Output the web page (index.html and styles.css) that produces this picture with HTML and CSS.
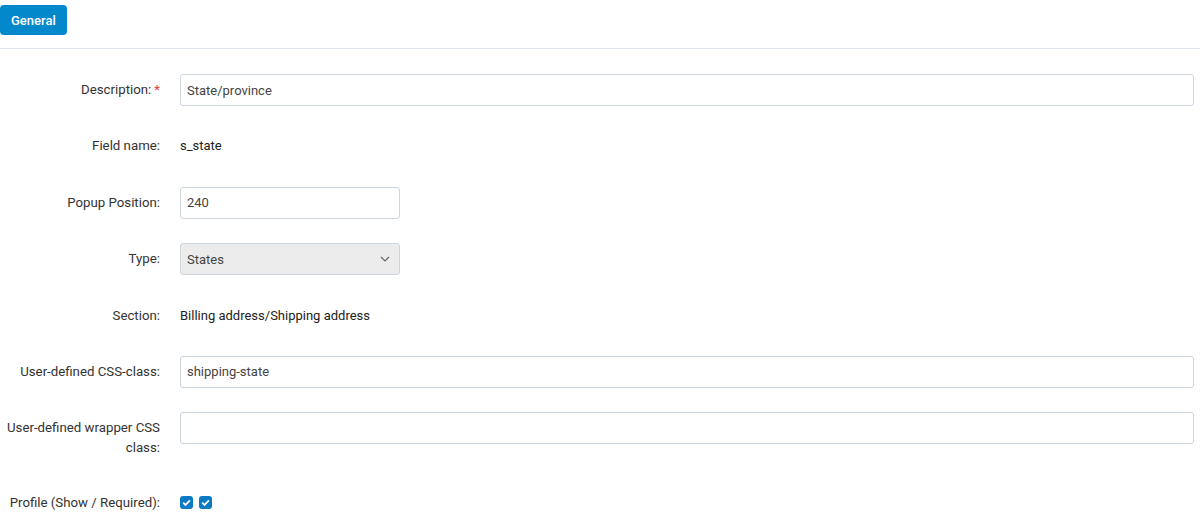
FILE: index.html
```html
<!DOCTYPE html>
<html lang="en">
<head>
  <meta charset="UTF-8">
  <title>Profile field</title>
  <link rel="stylesheet" href="styles.css">
</head>
<body>

  <div class="tabs">
    <button class="tab active">General</button>
  </div>

  <form class="form">
    <div class="row">
      <label class="label">Description:<span class="req">*</span></label>
      <div class="control"><input class="input" type="text" value="State/province"></div>
    </div>

    <div class="row">
      <label class="label">Field name:</label>
      <div class="control text">s_state</div>
    </div>

    <div class="row">
      <label class="label">Popup Position:</label>
      <div class="control"><input class="input short" type="text" value="240"></div>
    </div>

    <div class="row">
      <label class="label">Type:</label>
      <div class="control">
        <div class="select short">
          <span>States</span>
          <svg width="10" height="6" viewBox="0 0 10 6"><path d="M1 1l4 4 4-4" fill="none" stroke="#666" stroke-width="1.2"/></svg>
        </div>
      </div>
    </div>

    <div class="row">
      <label class="label">Section:</label>
      <div class="control text">Billing address/Shipping address</div>
    </div>

    <div class="row">
      <label class="label">User-defined CSS-class:</label>
      <div class="control"><input class="input" type="text" value="shipping-state"></div>
    </div>

    <div class="row">
      <label class="label">User-defined wrapper CSS class:</label>
      <div class="control"><input class="input" type="text" value=""></div>
    </div>

    <div class="row">
      <label class="label">Profile (Show / Required):</label>
      <div class="control checks">
        <span class="check"><svg width="13" height="13" viewBox="0 0 13 13"><path d="M3.2 6.6l2.3 2.3 4.4-4.6" fill="none" stroke="#fff" stroke-width="1.8"/></svg></span>
        <span class="check"><svg width="13" height="13" viewBox="0 0 13 13"><path d="M3.2 6.6l2.3 2.3 4.4-4.6" fill="none" stroke="#fff" stroke-width="1.8"/></svg></span>
      </div>
    </div>
  </form>

</body>
</html>
```

FILE: styles.css
```css
body {
  margin: 0;
  padding: 0;
  font-family: Roboto, "Liberation Sans", sans-serif;
  font-size: 13px;
  color: #333;
  background: #fff;
}

.tabs {
  padding-top: 5px;
  padding-bottom: 13px;
  border-bottom: 1px solid #dfe6ee;
}

.tab {
  display: block;
  height: 30px;
  padding: 0 11px;
  border: 0;
  border-radius: 4px;
  background: #0388cc;
  color: #fff;
  font-family: inherit;
  font-size: 13px;
  font-weight: 500;
}

.form {
  padding-top: 25px;
}

.row {
  display: flex;
  margin-bottom: 24.4px;
}

.label {
  width: 160px;
  box-sizing: border-box;
  padding-top: 6px;
  padding-bottom: 4px;
  line-height: 20px;
  font-size: 13.25px;
  text-align: right;
  color: #333;
}

.req {
  color: #e83a3a;
  margin-left: 3px;
}

.control {
  flex: 1;
  margin-left: 20px;
  margin-right: 6px;
}

.control.text {
  padding-top: 6px;
  line-height: 20px;
  height: 26px;
  color: #222;
}

.input {
  display: block;
  width: 100%;
  height: 32px;
  box-sizing: border-box;
  padding: 0 6px;
  border: 1px solid #cdd6df;
  border-radius: 3px;
  font-family: inherit;
  font-size: 13px;
  color: #444;
  background: #fff;
}

.short {
  width: 220px;
}

.select {
  display: flex;
  align-items: center;
  justify-content: space-between;
  height: 32px;
  box-sizing: border-box;
  padding: 0 6px 0 6px;
  border: 1px solid #cdd6df;
  border-radius: 3px;
  background: #ececec;
  color: #444;
}

.select svg {
  margin-right: 3px;
}

.checks {
  display: flex;
  gap: 6px;
  padding-top: 9px;
  height: 23px;
}

.check {
  display: block;
  width: 13px;
  height: 13px;
  border-radius: 3px;
  background: #0b79c4;
}

.check svg {
  display: block;
}
```
